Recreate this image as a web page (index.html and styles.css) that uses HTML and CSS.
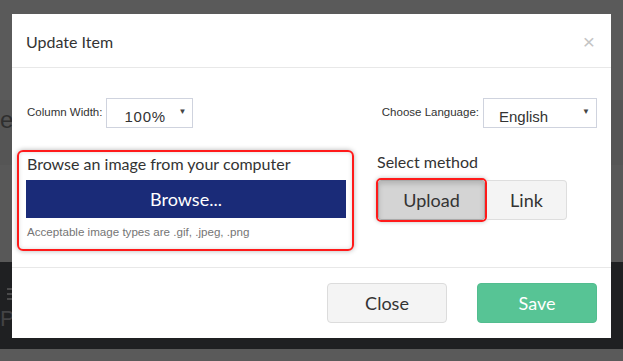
FILE: index.html
```html
<!DOCTYPE html>
<html lang="en">
<head>
    <meta charset="UTF-8">
    <title>Update Item</title>
    <link rel="stylesheet" href="styles.css">
</head>
<body>

    <!-- Page behind the dialog (dimmed) -->
    <div class="page">
        <div class="page-top"></div>
        <div class="page-heading"><span>es</span></div>
        <div class="page-mid"></div>
        <div class="page-nav">
            <div class="nav-icon"><i></i><i></i><i></i></div>
            <div class="nav-text">Pa</div>
        </div>
        <div class="page-bottom"></div>
    </div>

    <!-- Update item dialog -->
    <div class="modal">
        <div class="modal-header">
            <h4>Update Item</h4>
            <span class="close-x">&times;</span>
        </div>

        <div class="modal-body">
            <div class="options-row">
                <div class="option">
                    <label>Column Width:</label>
                    <div class="select select-width">
                        <span class="select-value">100%</span>
                        <span class="select-arrow">&#9660;</span>
                    </div>
                </div>
                <div class="option">
                    <label>Choose Language:</label>
                    <div class="select select-lang">
                        <span class="select-value">English</span>
                        <span class="select-arrow">&#9660;</span>
                    </div>
                </div>
            </div>

            <div class="upload-row">
                <div class="browse-box">
                    <div class="browse-label">Browse an image from your computer</div>
                    <button class="btn-browse">Browse...</button>
                    <div class="help-text">Acceptable image types are .gif, .jpeg, .png</div>
                </div>
                <div class="method">
                    <div class="method-label">Select method</div>
                    <div class="btn-group">
                        <div class="highlight"><button class="btn-method active">Upload</button></div>
                        <button class="btn-method link">Link</button>
                    </div>
                </div>
            </div>
        </div>

        <div class="modal-footer">
            <button class="btn btn-close">Close</button>
            <button class="btn btn-save">Save</button>
        </div>
    </div>

</body>
</html>
```

FILE: styles.css
```css
/* Algemeen */
body {
    margin: 0;
    padding: 0;
    font-family: 'Lato', 'Open Sans', sans-serif;
    background-color: #5a5a5a;
    overflow: hidden;
}

/* Pagina achter de dialoog */
.page {
    height: 361px;
    display: flex;
    flex-direction: column;
}

.page-top {
    height: 100px;
    background-color: #5a5a5a;
}

.page-heading {
    height: 65px;
    background-color: #555555;
    font-family: 'Liberation Sans', Arial, sans-serif;
    font-size: 24px;
    color: #2f2f2f;
    line-height: 1;
    padding-top: 8px;
    box-sizing: border-box;
}

.page-mid {
    height: 97px;
    background-color: #585858;
}

.page-nav {
    height: 87px;
    background-color: #1f2022;
    padding-top: 26px;
    box-sizing: border-box;
}

.nav-icon {
    display: flex;
    flex-direction: column;
    gap: 3px;
    margin-left: 7px;
    width: 6px;
}

.nav-icon i {
    display: block;
    height: 2px;
    background-color: #4a4a4b;
}

.nav-text {
    font-family: 'Liberation Sans', Arial, sans-serif;
    font-size: 22px;
    color: #434345;
    margin-top: 6px;
}

.page-bottom {
    flex-grow: 1;
    background-color: #5a5a5a;
}

/* Dialoog */
.modal {
    position: absolute;
    left: 12px;
    top: 14px;
    width: 599px;
    height: 324px;
    background-color: #fff;
    display: flex;
    flex-direction: column;
}

.modal-header {
    height: 53px;
    border-bottom: 1px solid #e8e8e8;
    display: flex;
    align-items: center;
    justify-content: space-between;
    padding: 0 16px 0 14px;
}

.modal-header h4 {
    margin: 0;
    font-size: 16px;
    font-weight: normal;
    color: #333;
    padding-top: 2px;
}

.close-x {
    font-family: 'Liberation Sans', Arial, sans-serif;
    font-size: 21px;
    color: #c4c4c4;
    line-height: 1;
    padding-top: 1px;
}

.modal-body {
    height: 199px;
    padding-top: 30px;
    box-sizing: border-box;
}

/* Keuzevelden */
.options-row {
    display: flex;
    justify-content: space-between;
    padding: 0 14px 0 15px;
}

.option {
    display: flex;
    align-items: center;
}

.option label {
    font-family: 'Liberation Sans', Arial, sans-serif;
    font-size: 11.5px;
    color: #333;
    margin-right: 4px;
    padding-bottom: 3px;
}

.select {
    height: 30px;
    box-sizing: border-box;
    border: 1px solid #cfd3de;
    display: flex;
    align-items: center;
    justify-content: space-between;
    font-family: 'Liberation Sans', Arial, sans-serif;
    color: #333;
    padding: 0 6px 0 15px;
}

.select-width {
    width: 87px;
    padding-left: 17px;
}

.select-lang {
    width: 114px;
}

.select-value {
    font-size: 15px;
    padding-top: 6px;
}

.select-width .select-value {
    letter-spacing: 0.8px;
}

.select-arrow {
    font-size: 8px;
    color: #444;
    padding-bottom: 4px;
}

/* Upload rij */
.upload-row {
    display: flex;
    margin-top: 22px;
    padding-left: 5px;
}

.browse-box {
    width: 337px;
    height: 101px;
    box-sizing: border-box;
    border: 2px solid #ff1a1a;
    border-radius: 6px;
    box-shadow: 0 0 5px rgba(0, 0, 0, 0.3), inset 0 0 4px rgba(0, 0, 0, 0.15);
    padding: 2px 6px 0 7px;
}

.browse-label {
    font-size: 16px;
    color: #333;
    margin-left: 1px;
    line-height: 20px;
}

.btn-browse {
    display: block;
    width: 320px;
    height: 38px;
    margin-top: 6px;
    border: none;
    background-color: #1a2b78;
    color: #fff;
    font-family: 'Lato', sans-serif;
    font-size: 18px;
    padding: 0;
}

.help-text {
    font-family: 'Liberation Sans', Arial, sans-serif;
    font-size: 11.6px;
    color: #757575;
    margin-top: 7px;
    margin-left: 1px;
}

/* Methode */
.method {
    margin-left: 22px;
}

.method-label {
    font-size: 16px;
    color: #333;
    line-height: 20px;
    margin-top: 2px;
    margin-left: 1px;
}

.btn-group {
    display: flex;
    align-items: center;
    margin-top: 6px;
}

.highlight {
    border: 2px solid #ff1a1a;
    border-radius: 5px;
    box-shadow: 0 0 4px rgba(0, 0, 0, 0.25);
    display: flex;
}

.btn-method {
    height: 40px;
    font-family: 'Lato', sans-serif;
    font-size: 18px;
    color: #333;
    padding: 0;
    cursor: pointer;
}

.btn-method.active {
    width: 107px;
    background-color: #d4d4d4;
    border: 1px solid #a9a9a9;
    border-radius: 3px;
    box-shadow: inset 0 3px 5px rgba(0, 0, 0, 0.15);
}

.btn-method.link {
    width: 80px;
    height: 40px;
    background-color: #f4f4f4;
    border: 1px solid #dedede;
    border-left: none;
    border-radius: 0 4px 4px 0;
}

/* Footer */
.modal-footer {
    flex-grow: 1;
    border-top: 1px solid #e8e8e8;
    display: flex;
    justify-content: flex-end;
    align-items: flex-start;
    gap: 30px;
    padding: 15px 14px 0 0;
}

.btn {
    width: 120px;
    height: 40px;
    border-radius: 4px;
    font-family: 'Lato', sans-serif;
    font-size: 18px;
    padding: 0;
    cursor: pointer;
}

.btn-close {
    background-color: #f4f4f4;
    border: 1px solid #dcdcdc;
    color: #333;
}

.btn-save {
    background-color: #57c495;
    border: 1px solid #52bd8f;
    color: #fff;
}
```
